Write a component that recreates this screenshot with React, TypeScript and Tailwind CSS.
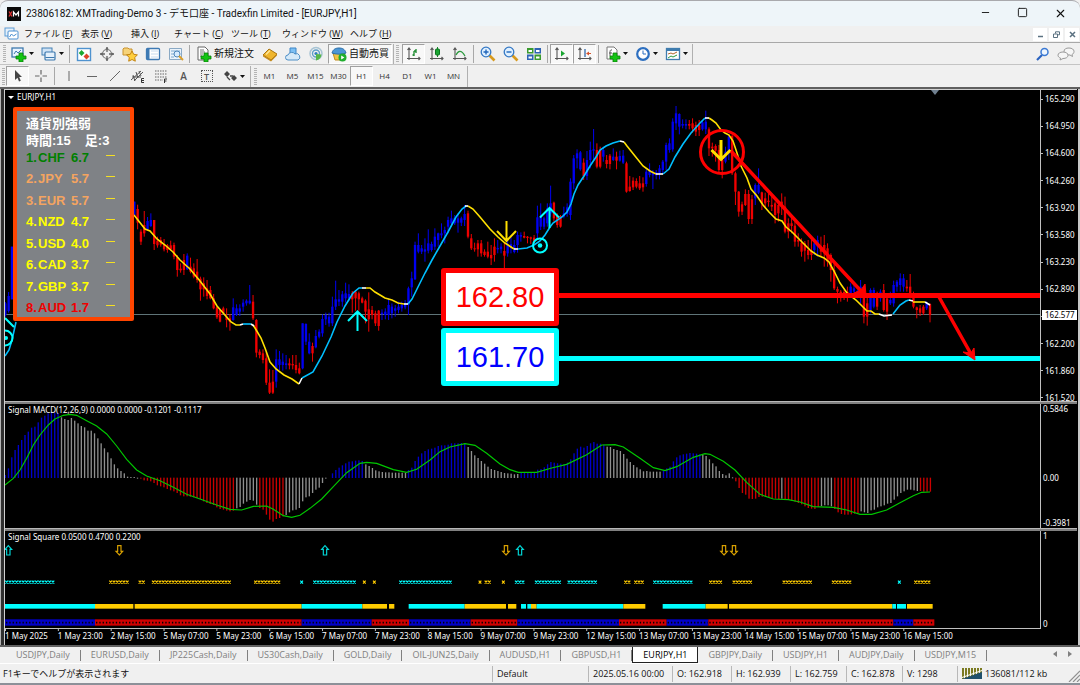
import React from 'react';
import { Minus, Square, X } from 'lucide-react';

// Horizontal distance between two bars. All chart data below is kept in
// thirds of a pixel, the plot groups are scaled down when drawn.
const STEP = 9.915;
const SCALE = 'scale(0.33333)';

const BAR_COLORS: Record<string, string> = {
  b: '#0000f0',
  r: '#f00000',
  g: '#a8a8a8',
};

interface Run {
  x: number;
  bars: string;
}

// each bar: colour, high, body top, body bottom, low
const candleRuns: Run[] = [
  { x: 16, bars: 'b636,640,676,680 b606,618,663,668 b470,470,628,628' },
  {
    x: 403,
    bars:
      'b335,335,375,375 r344,357,398,418 r418,425,455,465 r363,405,430,440 b381,393,418,420 b370,390,408,411 r390,390,462,480 r440,452,466,473 r441,450,464,470 r447,465,478,484 r462,466,480,488 r452,466,478,482 r458,465,500,508 r495,502,540,560 r520,536,541,548 r492,510,540,555 b490,497,538,540 r503,530,545,550 r520,535,560,565 r507,545,570,578 r560,566,598,632 r562,580,598,620 r570,595,618,628 r588,600,625,628 r612,625,655,658 r650,652,682,687',
  },
  {
    x: 660,
    bars:
      'r660,660,695,697 r650,655,670,675 r655,680,690,712 r672,685,695,722 b625,652,690,692 b643,655,675,678 b643,655,665,678 b628,638,650,665 b628,632,640,647 b585,632,640,643 r615,635,685,690 r687,690,788,802 r778,785,795,805 r778,790,810,820 r785,805,878,885 r838,878,908,912 r840,875,908,912 b778,808,875,893 b783,808,825,840 b790,815,825,842 b795,820,825,838 r805,820,826,838 r795,822,826,838 r795,825,840,850 r818,835,850,853 b700,700,835,838 b700,702,755,765 b730,755,790,793 r758,768,790,815 b720,738,772,775 b718,725,740,745 b673,687,730,740 b668,675,688,705 b668,680,700,710 b620,650,700,708 b572,628,650,660 b600,628,635,648',
  },
  {
    x: 1027,
    bars:
      'b603,613,635,650 b578,610,625,638 b583,612,625,632 r603,610,628,668 r600,605,625,662 r605,610,628,662 r620,625,638,640 r628,632,665,700 r607,658,688,725 r648,660,675,688 r662,670,700,708 r660,662,708,722 b658,668,672,690 b655,665,675,688 b625,645,675,690 b640,650,670,685 b645,655,662,680 b635,650,660,670 b635,645,655,665 b630,640,652,658 b590,595,645,675 b545,565,592,620 b455,465,568,570 b430,465,485,490 b465,475,485,492 b445,478,485,515 b418,460,482,490 b455,462,480,485 b415,440,470,480 b428,430,450,470 b400,430,436,445 b410,420,430,460 b380,390,410,430 b362,385,400,405 b375,383,400,405 b370,385,398,428 b380,385,398,408 b345,372,390,408',
  },
  {
    x: 1404,
    bars:
      'r362,370,440,445 r432,445,475,480 r458,475,478,485 r450,460,478,500 r450,460,490,500 r478,485,495,500 r455,485,500,505 r465,495,505,525 r445,470,495,515 b450,474,478,490 b460,470,478,490 r460,483,497,535 b445,465,490,500 b440,462,475,490 b450,465,486,490 b425,435,465,488 b427,435,440,455 r425,438,443,445 r438,440,444,460 r440,442,446,462 r435,443,455,465 b347,382,430,445 b340,380,410,420 b380,385,410,418 b340,355,400,410 b287,340,370,380 r335,338,385,395 r370,378,405,413 r375,378,410,413 b350,370,380,385 b340,352,372,380 b265,275,375,390 b195,205,280,298 b178,190,205,235 b183,187,238,242 r205,218,258,270 b183,210,258,270 b155,180,210,235 b117,178,182,213 r160,180,230,235 r170,180,230,235',
  },
  {
    x: 1810,
    bars:
      'b170,180,200,215 r195,210,222,235 r192,197,222,238 b175,200,210,213 r185,200,212,238 b182,198,212,215 b180,197,218,222 r215,220,305,308 r258,290,303,305 r262,272,292,300 r265,273,290,295 r258,280,295,300 r262,280,292,305 b235,245,282,290 b220,240,255,262 b240,246,256,297 b240,246,256,268 b225,235,250,268 b210,215,240,250 b158,165,215,240 b145,160,180,188 b85,95,178,185 b48,70,100,120 b70,72,110,133 b88,102,107,115 b88,102,107,118 r90,102,107,118 r85,100,115,128 r95,105,125,138 r90,105,120,138 b90,97,118,122 b62,95,118,132',
  },
  {
    x: 2127,
    bars:
      'r112,118,175,198 r158,170,175,200 r163,168,182,215 r165,180,240,250 r200,210,240,265 b170,185,215,220 b135,140,190,210 r135,138,250,255 r245,250,305,345 r303,305,365,380 r335,343,365,375 r298,312,345,348 r300,312,387,402 r315,328,387,402 b280,285,325,345 b235,285,308,312 r305,307,340,360 r308,325,340,355 r310,332,336,350 r320,345,350,363 r335,340,375,400 r333,345,370,395 r310,335,345,375 r320,350,425,430 r385,400,425,445 r378,400,408,430 r395,407,455,470 r430,450,455,470 r445,458,485,500 r453,460,482,515 r450,480,495,508 r450,482,495,510',
  },
  {
    x: 2443,
    bars:
      'b450,460,480,495 b437,450,470,500 r440,470,485,500 r435,465,490,530 r460,475,515,530 r490,495,540,575 r520,540,595,600 r590,597,605,640 r600,605,612,635 r600,606,612,630 r590,605,620,635 b580,590,610,620 b585,595,605,620 b600,604,612,625 b570,590,610,640 r590,610,680,700 r620,640,680,707 b595,600,660,670 b593,600,650,655 r605,615,650,660 b598,605,625,635 r582,600,660,665 r620,625,665,690 b605,630,640,645 b572,585,640,650 b570,575,590,605 b550,565,585,605 b552,565,590,605 r570,590,595,605 r552,590,610,625 r605,615,650,655 r650,652,660,685 r645,655,668,678 r645,650,670,675 b635,640,655,660 r640,643,675,697',
  },
];

const averageLines: [string, string][] = [
  ['#00bfff', '16,232 12,250 9,260 5,266'],
  ['#ffe000', '134,125 145,139 150,141 157,149 165,155 173,162 180,170 190,179 200,191 210,204 217,216 224,224 231,232 236,235 240,235'],
  ['#00bfff', '243,234 251,234'],
  ['#ffe000', '253,235 255,238 261,248 265,258 270,272 276,279 284,285 292,289 299,294'],
  ['#00bfff', '302,288 313,282 322,266 331,247 337,232 345,216 353,203 359,198 362,198'],
  ['#ffe000', '366,198 370,198 375,202 385,208 392,210 398,213 404,214'],
  ['#00bfff', '408,214 412,209 418,197 425,183 432,170 440,156 448,142 456,127 462,119 466,116'],
  ['#ffe000', '468,116 473,119 480,127 490,139 498,147 505,153 511,157 514,159'],
  ['#00bfff', '518,159 527,158 534,155 540,151 545,145 550,137 553,133 562,127 567,122 571,114 574,104 578,95 584,86 590,76 596,67 600,60 606,56 613,53 620,51'],
  ['#ffe000', '624,52 627,56 635,66 643,76 650,81 656,84'],
  ['#00bfff', '663,84 669,79 675,67 683,54 691,43 700,33 705,28'],
  ['#ffe000', '709,28 712,30 716,33 721,40 725,43 729,45 733,51 737,63 741,76 747,88 751,99 757,106 763,115 769,122 776,129 782,131 786,137 792,142 799,149 805,155 811,161 817,165 824,168 829,172 834,181 840,193 847,203 856,210 862,216 867,221 871,221 875,224 879,224'],
  ['#00bfff', '893,224 900,215 906,211 909,210'],
  ['#ffe000', '913,212 925,212'],
  ['#ffffff', '240,235 243,234'],
  ['#ffffff', '251,234 254,236'],
  ['#ffffff', '299,294 302,288'],
  ['#ffffff', '362,198 366,198'],
  ['#ffffff', '404,214 408,214'],
  ['#ffffff', '465,116 468,116'],
  ['#ffffff', '514,159 518,159'],
  ['#ffffff', '620,51 624,52'],
  ['#ffffff', '656,84 663,84'],
  ['#ffffff', '705,28 709,28'],
  ['#ffffff', '879,224 884,226 892,225'],
  ['#ffffff', '909,210 913,211'],
  ['#ffffff', '925,212 930,215'],
];

// y of the end of each histogram bar, the zero line is at 234
const macdRuns: { x: number; color: string; ends: number[] }[] = [
  { x: 15, color: 'b', ends: [225, 205, 172, 150, 135, 120, 105, 95, 83, 80, 67, 53, 47, 40, 38, 38, 40] },
  { x: 184, color: 'g', ends: [52, 57, 60, 54, 62, 70, 78, 82, 92, 92, 100, 115, 130, 145, 157, 175, 193, 205, 213, 220, 230, 231, 231, 233] },
  { x: 422, color: 'r', ends: [237, 242, 243, 245, 250, 257, 260, 263, 268, 272, 275, 280, 287, 290, 290, 291, 293, 295, 298, 305, 310, 313, 316, 323, 328, 330, 333, 335, 333] },
  { x: 710, color: 'g', ends: [326, 322, 312, 306, 301, 303, 315] },
  { x: 779, color: 'r', ends: [325, 330, 345, 360, 366, 358, 355, 350] },
  { x: 858, color: 'g', ends: [346, 338, 332, 330, 325, 305, 293, 290, 280, 270, 264, 250, 237] },
  { x: 997, color: 'b', ends: [220, 210, 203, 196, 190, 185, 184, 182, 181, 183] },
  { x: 1097, color: 'g', ends: [193, 198, 204, 211, 214, 216, 217, 217, 218, 218, 218, 218, 218] },
  { x: 1225, color: 'b', ends: [210, 203, 183, 170, 160, 153, 148, 146, 143, 138, 136, 136, 134, 130, 130, 130, 129, 130] },
  { x: 1404, color: 'g', ends: [141, 153, 166, 174, 183, 191, 200, 207, 210, 213, 216, 219, 220, 221, 223, 222] },
  { x: 1563, color: 'b', ends: [218, 217, 217, 217, 217, 209, 207, 202, 193, 186, 188, 190, 191, 192, 188, 178, 160, 146, 140, 143, 138, 130, 126, 131, 131, 134] },
  { x: 1821, color: 'g', ends: [140, 141, 147, 150, 153, 162, 176, 186, 195, 202, 208, 214, 213, 215, 215, 215, 215] },
  { x: 1990, color: 'b', ends: [212, 205, 200, 184, 172, 166, 163, 161, 159, 160, 161, 163] },
  { x: 2108, color: 'g', ends: [165, 168, 178, 190, 199, 213, 222, 226, 220, 232] },
  { x: 2207, color: 'r', ends: [245, 265, 280, 285, 297, 298, 297, 292, 291, 292, 292, 295, 297, 298] },
  { x: 2345, color: 'g', ends: [297] },
  { x: 2355, color: 'r', ends: [298, 300, 303, 306, 310, 314, 320, 325, 327, 328, 322] },
  { x: 2464, color: 'g', ends: [319, 317, 317, 320] },
  { x: 2504, color: 'r', ends: [328, 338, 343, 345, 345, 344, 342, 340] },
  { x: 2583, color: 'g', ends: [335, 338, 340, 332, 330, 323, 320, 317, 312, 310, 300, 290, 280, 275, 270, 270, 272, 274] },
  { x: 2761, color: 'r', ends: [274, 276, 276, 276] },
];

const macdSignal =
  '15,255 40,235 60,210 80,175 100,135 120,105 145,75 165,57 190,46 210,43 230,46 260,62 290,78 320,102 350,138 380,178 410,210 440,228 480,242 520,262 560,283 600,297 650,315 690,328 725,330 760,319 800,318 820,328 850,347 875,352 900,346 930,325 965,297 1000,260 1040,218 1080,190 1100,187 1130,190 1180,209 1220,217 1250,208 1290,180 1320,155 1350,141 1395,131 1425,136 1460,160 1500,192 1530,209 1555,217 1610,217 1655,204 1700,193 1760,164 1805,135 1845,134 1870,141 1920,175 1960,203 1995,212 2030,200 2080,172 2115,161 2130,163 2170,184 2205,210 2240,247 2280,283 2320,297 2365,299 2400,306 2440,320 2500,322 2540,330 2580,343 2615,343 2660,330 2700,308 2740,287 2765,277 2790,276';

type Span = [number, number, string];
const C = '#00ffff';
const Y = '#ffcc00';
const crossSpans: Span[] = [
  [20, 165, C], [332, 383, Y], [420, 434, Y], [460, 690, Y], [767, 840, Y], [905, 906, C], [944, 1068, C], [1093, 1094, Y], [1123, 1124, Y],
  [1202, 1354, C], [1440, 1441, Y], [1458, 1474, Y], [1510, 1511, Y], [1549, 1572, C], [1609, 1682, C], [1707, 1790, C], [1877, 1890, Y],
  [1907, 1930, Y], [1964, 2078, C], [2132, 2168, Y], [2202, 2256, Y], [2352, 2435, Y], [2500, 2555, Y], [2698, 2699, C], [2747, 2792, Y],
];
const trendSpans: Span[] = [
  [15, 285, C], [285, 400, Y], [404, 905, Y], [905, 1087, C], [1087, 1161, Y], [1167, 1183, Y], [1226, 1394, C], [1394, 1518, Y], [1524, 1549, Y],
  [1563, 1578, C], [1582, 1593, C], [1593, 1610, Y], [1610, 1870, C], [1870, 1936, Y], [1988, 2117, C], [2117, 2183, Y], [2187, 2677, Y],
  [2677, 2688, C], [2691, 2718, C], [2721, 2798, Y],
];
const baseSpans: Span[] = [
  [15, 285, '#0000c8'], [285, 905, '#d00000'], [905, 1115, '#0000c8'], [1115, 1227, '#d00000'], [1227, 1412, '#0000c8'], [1412, 1552, '#d00000'],
  [1552, 1857, '#0000c8'], [1857, 2000, '#d00000'], [2000, 2125, '#0000c8'], [2125, 2680, '#d00000'], [2680, 2740, '#0000c8'], [2740, 2803, '#d00000'],
];

const prices = ['165.290', '164.950', '164.600', '164.260', '163.920', '163.580', '163.230', '162.890', '162.550', '162.200', '161.860', '161.520'];

const times = [
  '1 May 2025', '1 May 23:00', '2 May 15:00', '5 May 07:00', '5 May 23:00', '6 May 15:00', '7 May 07:00', '7 May 23:00', '8 May 15:00',
  '9 May 07:00', '9 May 23:00', '12 May 15:00', '13 May 07:00', '13 May 23:00', '14 May 15:00', '15 May 07:00', '15 May 23:00', '16 May 15:00',
];

const strengths = [
  { name: 'CHF', value: '6.7', color: 'text-[#008000]' },
  { name: 'JPY', value: '5.7', color: 'text-[#f4a460]' },
  { name: 'EUR', value: '5.7', color: 'text-[#f4a460]' },
  { name: 'NZD', value: '4.7', color: 'text-[#ffff00]' },
  { name: 'USD', value: '4.0', color: 'text-[#ffff00]' },
  { name: 'CAD', value: '3.7', color: 'text-[#ffff00]' },
  { name: 'GBP', value: '3.7', color: 'text-[#ffff00]' },
  { name: 'AUD', value: '1.7', color: 'text-[#f00000]' },
];

const menus = [
  { label: 'ファイル', accel: 'F', width: 'w-[57px]' },
  { label: '表示', accel: 'V', width: 'w-[50px]' },
  { label: '挿入', accel: 'I', width: 'w-[43px]' },
  { label: 'チャート', accel: 'C', width: 'w-[57px]' },
  { label: 'ツール', accel: 'T', width: 'w-[51px]' },
  { label: 'ウィンドウ', accel: 'W', width: 'w-[68px]' },
  { label: 'ヘルプ', accel: 'H', width: 'w-[50px]' },
];

const tabs = [
  'USDJPY,Daily', 'EURUSD,Daily', 'JP225Cash,Daily', 'US30Cash,Daily', 'GOLD,Daily', 'OIL-JUN25,Daily', 'AUDUSD,H1',
  'GBPUSD,H1', 'EURJPY,H1', 'GBPJPY,Daily', 'USDJPY,H1', 'AUDJPY,Daily', 'USDJPY,M15',
];

/* ---------- toolbar pieces ---------- */

const Icon: React.FC<{ children: React.ReactNode }> = ({ children }) => (
  <svg viewBox="0 0 16 16" className="h-4 w-4 shrink-0" fill="none" aria-hidden="true">{children}</svg>
);

const Grip = () => (
  <div className="flex h-[17px] w-[5px] shrink-0 justify-center">
    <div className="w-[3px] bg-[repeating-linear-gradient(to_bottom,#b4b4b4_0_1px,#f0f0f0_1px_2px)]" />
  </div>
);

const Sep = () => <div className="mx-[2px] h-[18px] w-px shrink-0 bg-[#a8a8a8]" />;

interface ToolProps {
  label: string;
  pressed?: boolean;
  drop?: boolean;
  children: React.ReactNode;
}

const Tool: React.FC<ToolProps> = ({ label, pressed, drop, children }) => (
  <button
    type="button"
    aria-label={label}
    className={`flex h-5 shrink-0 items-center justify-center ${drop ? 'w-[30px] gap-[2px]' : 'w-[23px]'} ${pressed ? 'border border-[#a0a0a0] border-r-white border-b-white bg-[#f8f8f8]' : ''}`}
  >
    {children}
    {drop && <svg viewBox="0 0 5 3" className="h-[3px] w-[5px]" aria-hidden="true"><path d="M0 0h5L2.5 3z" fill="#111" /></svg>}
  </button>
);

const Plus = () => <path d="M8 7h4v3h3v3h-3v3H8v-3H5v-3h3z" fill="#12c412" stroke="#0b7d0b" strokeWidth="0.8" />;
const Axes = () => <path d="M3 2v12M1 12.5h13M1.5 4L3 2l1.500 2M12.500 11l1.500 1.500-1.500 1.500" stroke="#555" strokeWidth="1.1" />;

const Lens: React.FC<{ plus?: boolean }> = ({ plus }) => (
  <Icon>
    <path d="M9.500 9.500l5 5" stroke="#d79a1e" strokeWidth="2.600" />
    <circle cx="6" cy="6" r="4.800" fill="#dff0ff" stroke="#3578c4" strokeWidth="1.300" />
    <path d={plus ? 'M3.500 6h5M6 3.500v5' : 'M3.500 6h5'} stroke="#2266bb" strokeWidth="1.400" />
  </Icon>
);

const MainToolbar = () => (
  <div className="flex h-[22px] items-center border-b border-[#c4c4c4] pl-[2px]">
    <Grip />
    <Tool label="New chart" drop>
      <Icon><rect x="1" y="2" width="11" height="9" fill="#e8f3ff" stroke="#3e79ad" strokeWidth="1.300" /><path d="M3 8l2-3 2 2 3-3" stroke="#3e79ad" /><Plus /></Icon>
    </Tool>
    <Tool label="Profiles" drop>
      <Icon><rect x="1" y="2" width="10" height="7" fill="#cfe3f6" stroke="#4580b4" /><rect x="4" y="6" width="10" height="8" rx="1" fill="#e4f0fb" stroke="#3c78ae" strokeWidth="1.200" /><path d="M4.500 11.500h9" stroke="#3c78ae" /></Icon>
    </Tool>
    <Sep />
    <Tool label="Market watch">
      <Icon><rect x="1.500" y="2.500" width="13" height="12" fill="#fff" stroke="#4f93cf" strokeWidth="1.400" /><path d="M5.500 4L8.500 7 5.500 10 2.800 7z" fill="#1ba831" /><path d="M10.500 7.500l3 3-3 3-3-3z" fill="#de4328" /></Icon>
    </Tool>
    <Tool label="Data window">
      <Icon><circle cx="8" cy="8" r="4.500" stroke="#777" strokeWidth="1.200" /><path d="M8 1v5M8 10v5M1 8h5M10 8h5" stroke="#666" strokeWidth="1.300" /><path d="M8 1l-1.500 2h3zM8 15l-1.500-2h3zM1 8l2-1.500v3zM15 8l-2-1.500v3z" fill="#666" /></Icon>
    </Tool>
    <Tool label="Navigator">
      <Icon><path d="M1 3l1-1h4l1 1h3v6H1z" fill="#f6d37a" stroke="#c8922e" /><path d="M10 5l1.700 3.300 3.700.6-2.700 2.600.6 3.700L10 13.500l-3.300 1.700.6-3.700-2.700-2.600 3.700-.6z" fill="#ffcf3d" stroke="#c38412" /></Icon>
    </Tool>
    <Tool label="Terminal">
      <Icon><rect x="1.500" y="2.500" width="13" height="11" rx="1" fill="#fff" stroke="#3d79b3" strokeWidth="1.300" /><path d="M2 3h2.500v10H2z" fill="#3d79b3" /><path d="M6 5h7M6 8h7M6 11h7" stroke="#c7dcef" /></Icon>
    </Tool>
    <Tool label="Strategy tester">
      <Icon><path d="M1.500 2.500h12v11h-12z" fill="#eaf3fb" stroke="#8aa9c4" /><path d="M3 5h9M3 8h4M3 11h3" stroke="#7da9ce" /><circle cx="9" cy="8" r="3" fill="#d7ecff" stroke="#4d86b9" /><path d="M11 10l4 4" stroke="#dca02c" strokeWidth="2" /></Icon>
    </Tool>
    <Sep />
    <button type="button" className="ml-1 flex h-5 w-[62px] shrink-0 items-center gap-[2px] whitespace-nowrap text-[10px]">
      <Icon><path d="M2 1h7l3 3v10H2z" fill="#fff" stroke="#666" /><path d="M4 4h4M4 6h5M4 8h3M4 10h2" stroke="#777" /><Plus /></Icon>
      新規注文
    </button>
    <Tool label="MetaEditor">
      <Icon><path d="M1 9l6-6 8 5-6 6z" fill="#efb52d" stroke="#a97512" /><path d="M1 9v1.500L9 15.500V14zM9 15.500L15 9.500V8l-6 6z" fill="#c48b1d" /><path d="M4 8.500l4-4" stroke="#ffe79a" strokeWidth="1.500" /></Icon>
    </Tool>
    <Tool label="Virtual hosting">
      <Icon><path d="M5 2h6v5.500H5z" fill="#7cc0f4" stroke="#3f86c6" /><path d="M3 14a2.500 2.500 0 010-5 4 4 0 017-1 3 3 0 013 6z" fill="#d5e9f8" stroke="#4e8fc6" /></Icon>
    </Tool>
    <Tool label="Signals">
      <Icon><circle cx="8" cy="7.500" r="6" stroke="#a8c4d4" strokeWidth="1.500" /><circle cx="8" cy="7.500" r="3.500" stroke="#5d9fc8" strokeWidth="1.400" /><circle cx="8" cy="7.500" r="1.600" fill="#2f7fc0" /><path d="M8 8v6.500a7 7 0 005.500-6z" fill="#55b648" /></Icon>
    </Tool>
    <button type="button" aria-pressed="true" className="ml-px flex h-5 w-[64px] shrink-0 items-center gap-[2px] whitespace-nowrap border border-[#a0a0a0] border-r-white border-b-white bg-[#f8f8f8] pl-[2px] text-[10px]">
      <Icon><path d="M2 7h12l-2 7H4z" fill="#f2c443" stroke="#bf8a1d" /><path d="M1 7c1-4 4-5 7-5s6 1 7 5c-3 1.500-11 1.500-14 0z" fill="#4c97d5" stroke="#2b6ea8" /><circle cx="11.500" cy="11.500" r="4" fill="#1fae2e" /><path d="M10.200 9.500v4l3.200-2z" fill="#fff" /></Icon>
      自動売買
    </button>
    <div className="ml-px h-5 w-px shrink-0 bg-[#b0b0b0]" />
    <div className="ml-px"><Grip /></div>
    <div className="ml-[2px] flex">
      <Tool label="Bar chart" pressed><Icon><Axes /><path d="M8 5v5M8 9H6.500M8 5h2M10 3v4" stroke="#17882a" strokeWidth="1.300" /></Icon></Tool>
      <Tool label="Candlesticks"><Icon><Axes /><path d="M8.500 1v10" stroke="#17882a" /><rect x="6.500" y="3" width="4" height="6" rx="1" fill="#19a531" stroke="#0d7420" /></Icon></Tool>
      <Tool label="Line chart"><Icon><Axes /><path d="M4 9c2-4 5-6 9 1" stroke="#2b9a3e" strokeWidth="1.200" /></Icon></Tool>
    </div>
    <Sep />
    <Tool label="Zoom in"><Lens plus /></Tool>
    <Tool label="Zoom out"><Lens /></Tool>
    <Tool label="Tile windows">
      <Icon><path d="M1 2h6.500v5.500H1zM8.500 8.500H15V14H8.500z" fill="#3a9a2e" /><path d="M8.500 2H15v5.500H8.500zM1 8.500h6.500V14H1z" fill="#2d63b4" /><path d="M2.500 4H6v2H2.500zM10 4h3.500v2H10zM2.500 10.500H6v2H2.500zM10 10.500h3.500v2H10z" fill="#fff" /></Icon>
    </Tool>
    <Sep />
    <Tool label="Auto scroll" pressed><Icon><Axes /><path d="M7 4.500v6l4-3z" fill="#19a531" /></Icon></Tool>
    <Tool label="Chart shift" pressed><Icon><Axes /><path d="M8 3v8" stroke="#3368a8" strokeWidth="1.300" /><path d="M9 7.500l3-2v4z" fill="#d7542c" /><path d="M11 7.500h3" stroke="#d7542c" /></Icon></Tool>
    <Sep />
    <div className="flex">
      <Tool label="Indicators" drop><Icon><path d="M2 1h7l3 3v9H2z" fill="#fff" stroke="#777" /><path d="M7 4c-2-.500-2 1-2 3v3M4 7h3" stroke="#555" /><Plus /></Icon></Tool>
      <Tool label="Periods" drop><Icon><circle cx="8" cy="8" r="5.800" fill="#fff" stroke="#2d6fc0" strokeWidth="2.200" /><path d="M8 4.500V8h3" stroke="#2d6fc0" /></Icon></Tool>
      <Tool label="Templates" drop><Icon><rect x="1.500" y="2.500" width="13" height="11" fill="#fff" stroke="#3f7cae" strokeWidth="1.300" /><path d="M1.500 4h13" stroke="#3f7cae" strokeWidth="2" /><path d="M3 8l3-1 2 1 4-2" stroke="#b3662b" /><path d="M3 12l3-2 2 1 4-2" stroke="#2b9a3e" /></Icon></Tool>
    </div>
    <div className="ml-px h-5 w-px shrink-0 bg-[#b0b0b0]" />
    <div className="flex-1" />
    <div className="flex pr-[3px]">
      <Tool label="Search"><Icon><path d="M7 9l-5 5" stroke="#2a62c0" strokeWidth="2.200" /><circle cx="9.500" cy="6" r="3.500" fill="#eef6ff" stroke="#3c7ad4" strokeWidth="1.500" /></Icon></Tool>
      <Tool label="Chat">
        <svg viewBox="0 0 18 14" className="h-[14px] w-[18px]" fill="#f6f6f6" stroke="#999" aria-hidden="true">
          <path d="M12 1c3 0 5 1.500 5 3.500 0 1.500-1 2.500-2 3l.5 2-2.500-1.500c-3.500 0-6-1-6-3.500S9 1 12 1z" />
          <path d="M6 5c3 0 5 1.300 5 3.300S9 11.500 6 11.500L3 13l.5-2C2 10.500 1 9.500 1 8.300 1 6.300 3 5 6 5z" />
        </svg>
      </Tool>
    </div>
  </div>
);

const timeframes = ['M1', 'M5', 'M15', 'M30', 'H1', 'H4', 'D1', 'W1', 'MN'];

const DrawingToolbar = () => (
  <div className="flex h-[22px] items-center pl-px">
    <Grip />
    <Tool label="Cursor" pressed><Icon><path d="M5 2v10l2.500-2.300L9 13.500l1.800-.800L9.200 9H12z" fill="#444" /></Icon></Tool>
    <Tool label="Crosshair"><Icon><path d="M8 2v4.500M8 9.500V14M2 8h4.500M9.500 8H14" stroke="#666" strokeWidth="1.200" /></Icon></Tool>
    <Sep />
    <Tool label="Vertical line"><Icon><path d="M8 3v10" stroke="#666" /></Icon></Tool>
    <Tool label="Horizontal line"><Icon><path d="M3 8.500h10" stroke="#666" /></Icon></Tool>
    <Tool label="Trendline"><Icon><path d="M3 13L13 3" stroke="#666" /></Icon></Tool>
    <Tool label="Channel"><Icon><path d="M1 12L11 3M4 13l9-9M3 7l2 6M6 4l2 6M9 3l2 5M2 9h9" stroke="#555" /><path d="M14 10.500h-2.500v4H14M11.500 12.500H14" stroke="#333" /></Icon></Tool>
    <Tool label="Fibonacci"><Icon><path d="M2 3h12M2 6h12M2 9h12M2 12h8" stroke="#666" strokeDasharray="1.500 1" /><path d="M14 11h-2.500v4M11.500 13H13.500" stroke="#333" /></Icon></Tool>
    <Tool label="Text"><span className="text-[10px] font-semibold text-[#555]">A</span></Tool>
    <Tool label="Text label"><span className="flex h-3 w-3 items-center justify-center border border-dotted border-[#555] text-[9px] leading-none font-semibold text-[#555]">T</span></Tool>
    <Tool label="Arrows" drop><Icon><path d="M2 6l3-3 3 3-3 3zM9 10l3-3 3 3-3 3z" fill="#444" /><path d="M5 9l3 3M8 8h3" stroke="#444" strokeWidth="1.300" /></Icon></Tool>
    <div className="mx-[2px] h-[21px] w-px bg-[#b0b0b0]" />
    <Grip />
    {timeframes.map((tf) => (
      <button
        key={tf}
        type="button"
        className={`h-5 w-[23px] shrink-0 text-center text-[8px] text-[#333] ${tf === 'H1' ? 'border border-[#a0a0a0] border-r-white border-b-white bg-[#f8f8f8]' : ''}`}
      >
        {tf}
      </button>
    ))}
    <div className="ml-[2px] h-[21px] w-px bg-[#b0b0b0]" />
  </div>
);

/* ---------- chart panes ---------- */

const Candles: React.FC<Run> = ({ x, bars }) => (
  <>
    {bars.split(' ').map((bar, i) => {
      const [high, top, bottom, low] = bar.slice(1).split(',').map(Number);
      const cx = x + i * STEP;
      return (
        <g key={i} fill={BAR_COLORS[bar[0]]}>
          <rect x={cx - 1.5} y={high} width={3} height={low - high} />
          <rect x={cx - 3.5} y={top} width={7} height={Math.max(bottom - top, 3)} />
        </g>
      );
    })}
  </>
);

const PricePane = () => (
  <svg className="block h-[311px] w-full" fill="none">
    <path d="M931 0h8l-4 5z" fill="#708090" />
    <path d="M8 6h6l-3 3z" fill="#fff" />
    <text x="17" y="10" fill="#fff" fontSize="8">EURJPY,H1</text>
    <line x1="0" x2="100%" y1="224.5" y2="224.5" stroke="#5f7478" />
    <g transform={SCALE}>
      {candleRuns.map((run) => <Candles key={run.x} {...run} />)}
    </g>
    {averageLines.map(([color, points]) => (
      <polyline key={points} points={points} stroke={color} strokeWidth="1.6" />
    ))}
    <g stroke="#00ffff" strokeWidth="2">
      <path d="M357.500 241v-19M348 231l9.500-9.500 9.500 9.500M549.500 138v-19M540 127.500l9.500-9.500 9.500 9.500M5 228l9 9" />
      <circle cx="540" cy="155.500" r="7" />
      <circle cx="5" cy="248" r="7.500" />
    </g>
    <circle cx="540" cy="155.500" r="2.300" fill="#00ffff" />
    <circle cx="6" cy="248" r="2" fill="#00ffff" />
    <path d="M506.500 131v20M497 141l9.500 10 9.500-10" stroke="#ffe000" strokeWidth="2" />
    <path d="M721 50v19M711.500 60l9.500 9.500 9.500-9.500" stroke="#ffe000" strokeWidth="3" />
    <line x1="556" x2="100%" y1="205.500" y2="205.500" stroke="#ff0000" strokeWidth="5" />
    <line x1="556" x2="100%" y1="268.500" y2="268.500" stroke="#00ffff" strokeWidth="5" />
    <circle cx="722" cy="62" r="21.500" stroke="#ff0000" strokeWidth="3" />
    <g stroke="#ff0000" fill="#ff0000">
      <path d="M731 61l130 140M939 207l32 57" strokeWidth="3.500" />
      <path d="M866 205l-1-11-4 6-7 3zM975 270l-1-12-3 5-8-1z" />
    </g>
  </svg>
);

const MacdPane = () => (
  <svg className="block h-[124px] w-full" fill="none">
    <g transform="translate(0 -4)">
      <g transform={SCALE}>
        {macdRuns.map((run) =>
          run.ends.map((end, i) => (
            <rect
              key={`${run.x}-${i}`}
              x={run.x + i * STEP - 1.5}
              y={Math.min(end, 233)}
              width={4}
              height={Math.max(Math.abs(234 - end), 3)}
              fill={BAR_COLORS[run.color]}
              opacity={0.85}
            />
          )),
        )}
        <polyline points={macdSignal} stroke="#00c800" strokeWidth="3.5" />
      </g>
    </g>
    <text x="8" y="9" fill="#fff" fontSize="8">Signal MACD(12,26,9) 0.0000 0.0000 -0.1201 -0.1117</text>
  </svg>
);

const UP = 'M0-15l10 11h-5v17h-10V-4h-5z';
const DOWN = 'M0 15L10 4H5v-17H-5V4h-5z';

const SquarePane = () => (
  <svg className="block h-[97px] w-full" fill="none">
    <text x="8" y="9" fill="#fff" fontSize="8">Signal Square 0.0500 0.4700 0.2200</text>
    <g transform="translate(0 -1)">
      <g transform={SCALE}>
        {[25, 975, 1560].map((x) => <path key={x} d={UP} transform={`translate(${x} 62)`} stroke="#00d8d8" strokeWidth="3.5" />)}
        {[358, 1518, 2172, 2202].map((x) => <path key={x} d={DOWN} transform={`translate(${x} 60)`} stroke="#d8a000" strokeWidth="3.5" />)}
        {crossSpans.map(([from, to, color]) => {
          const marks: string[] = [];
          for (let x = from; x <= to; x += STEP) marks.push(`M${x - 4} 152l8 9m0-9l-8 9`);
          return <path key={from} d={marks.join('')} stroke={color} strokeWidth="3.5" />;
        })}
        {trendSpans.map(([from, to, color]) => <rect key={from} x={from} y={222} width={to - from} height={14} fill={color} />)}
        {baseSpans.map(([from, to, color]) => (
          <g key={from}>
            <rect x={from} y={268} width={to - from} height={19} fill={color} />
            <path d={`M${from + 3} 278H${to - 2}`} stroke="#000" strokeWidth="5" strokeDasharray="4 5.9" />
          </g>
        ))}
      </g>
    </g>
  </svg>
);

const Divider = () => <div className="h-[3px] border-t border-[#b8b8b8] bg-[#808080]" />;

const StrengthPanel = () => (
  <div className="absolute top-[17px] left-[9px] w-[121px] rounded-[2px] border-4 border-[#ff4500] bg-[#7f8286] pt-1 pl-[9px] font-['Liberation_Sans','Noto_Sans_CJK_JP',sans-serif] text-[13px] font-bold">
    <p className="leading-[17px] text-white">通貨別強弱</p>
    <p className="flex gap-[14px] leading-[17px] text-white"><span>時間:15</span><span>足:3</span></p>
    <ol className="flex h-[168px] flex-col justify-between">
      {strengths.map((s, i) => (
        <li key={s.name} className={`flex h-[18px] items-start leading-[18px] ${s.color}`}>
          <span className="w-3">{i + 1}.</span>
          <span className="w-[33px]">{s.name}</span>
          <span className="w-[35px]">{s.value}</span>
          <span className="mt-[6px] h-px w-[9px] bg-[#f5e020]" />
        </li>
      ))}
    </ol>
  </div>
);

const ChartWindow = () => (
  <main className="flex border-t-2 border-[#606060] bg-black font-['Noto_Sans',Tahoma,sans-serif] text-[8px] text-white">
    <div className="w-1 shrink-0 border-l border-[#b4b4b4] bg-[#303030]" />
    <div className="min-w-0 flex-1 overflow-hidden border-t border-l border-[#d0d0d0]">
      <div className="relative -ml-[5px] flex">
        <div className="relative min-w-0 flex-1">
          <PricePane />
          <div className="absolute top-0 left-[4px]"><StrengthPanel /></div>
          <div className="absolute top-[178px] left-[441px] flex flex-col gap-[2px] font-['Liberation_Sans',Arial,sans-serif] text-[29px] leading-[48px]">
            <div className="w-[118px] rounded-[3px] border-[5px] border-[#ff0000] bg-white text-center text-[#ff0000]">162.80</div>
            <div className="w-[118px] rounded-[3px] border-[5px] border-[#00ffff] bg-white text-center text-[#0000ff]">161.70</div>
          </div>
        </div>
        <div className="relative flex w-[37px] shrink-0 flex-col justify-between border-l border-[#c0c0c0] pt-[6px] leading-[6px]">
          {prices.map((p) => (
            <div key={p} className="flex items-center gap-[2px]"><span className="h-px w-[2px] bg-[#c0c0c0]" />{p}</div>
          ))}
          <div className="absolute top-[220px] left-px w-9 bg-white pl-[3px] leading-[10px] text-black">162.577</div>
        </div>
      </div>
      <Divider />
      <div className="-ml-[5px] flex">
        <div className="min-w-0 flex-1"><MacdPane /></div>
        <div className="flex w-[37px] shrink-0 flex-col justify-between border-l border-[#c0c0c0] pl-[2px] leading-[10px]">
          <span>0.5846</span>
          <span className="pt-6">0.00</span>
          <span>-0.3981</span>
        </div>
      </div>
      <Divider />
      <div className="-ml-[5px] flex">
        <div className="min-w-0 flex-1 border-b border-[#c0c0c0]"><SquarePane /></div>
        <div className="flex w-[37px] shrink-0 flex-col justify-between border-l border-[#c0c0c0] pl-[2px] leading-[10px]">
          <span>1</span>
          <span>0</span>
        </div>
      </div>
      <div className="-ml-[5px]">
        <svg className="block h-4 w-full">
          {times.map((t, i) => (
            <g key={t}>
              <rect x={5 + i * 52.84} y="0" width="1" height="2" fill="#c0c0c0" />
              <text x={5 + i * 52.84} y="10" fill="#fff" fontSize="8">{t}</text>
            </g>
          ))}
        </svg>
      </div>
    </div>
    <div className="w-[3px] shrink-0 border-r-2 border-[#c8c8c8]" />
  </main>
);

const StatusCell: React.FC<{ width: string; children: React.ReactNode }> = ({ width, children }) => (
  <span className={`flex h-4 shrink-0 items-center gap-[3px] border-l border-[#b8b8b8] pl-1 whitespace-nowrap ${width}`}>{children}</span>
);

export default function App() {
  return (
    <div className="flex min-h-screen flex-col overflow-hidden bg-[#f0f0f0] font-['Open_Sans','Noto_Sans_CJK_JP',sans-serif] text-[9px] text-[#111]">
      <header className="flex h-[26px] items-center rounded-t-lg border-t border-[#a9a9ad] bg-[#eef5f9] pl-[7px]">
        <svg viewBox="0 0 14 14" className="h-[14px] w-[14px]" aria-hidden="true">
          <rect width="14" height="14" fill="#0a0a0a" />
          <path d="M2 4.500l3 5M5 4.500l-3 5" stroke="#e03030" strokeWidth="1.300" />
          <path d="M6.500 9.500V5L9 8l2.500-3v4.500" stroke="#fff" strokeWidth="1.200" fill="none" />
        </svg>
        <h1 className="ml-[5px] font-['Roboto','Noto_Sans_CJK_JP',sans-serif] text-[10px] whitespace-nowrap">23806182: XMTrading-Demo 3 - デモ口座 - Tradexfin Limited - [EURJPY,H1]</h1>
        <div className="ml-auto flex">
          <button type="button" aria-label="Minimize" className="flex w-[38px] justify-center"><Minus className="h-[11px] w-[11px]" /></button>
          <button type="button" aria-label="Maximize" className="flex w-[37px] justify-center"><Square className="h-[11px] w-[11px]" /></button>
          <button type="button" aria-label="Close" className="flex w-[39px] justify-center"><X className="h-[13px] w-[13px]" /></button>
        </div>
      </header>

      <nav className="flex h-[17px] items-center border-b border-[#a8a8a8] pl-[4px]">
        <Icon><rect x="1" y="2" width="9" height="8" fill="#e4f0fb" stroke="#5b9bd5" /><rect x="4" y="5" width="10" height="8" rx="1" fill="#fff" stroke="#4a8fd0" /><path d="M5.500 11l2-3 2 2 3-2" stroke="#4a8fd0" /></Icon>
        <div className="ml-1 flex flex-1">
          {menus.map((m) => (
            <button key={m.accel} type="button" className={`text-left whitespace-nowrap ${m.width}`}>
              {m.label} (<u>{m.accel}</u>)
            </button>
          ))}
        </div>
        <div className="flex gap-[2px] pr-px">
          <button type="button" aria-label="Minimize chart" className="flex h-[13px] w-[14px] items-center justify-center bg-white"><svg viewBox="0 0 7 7" className="h-[7px] w-[7px]" stroke="#5b7181"><path d="M1 5.500h5" strokeWidth="1.500" /></svg></button>
          <button type="button" aria-label="Restore chart" className="flex h-[13px] w-[14px] items-center justify-center bg-white"><svg viewBox="0 0 7 7" className="h-[7px] w-[7px]" stroke="#5b7181" fill="none"><path d="M2.500 2.500V.8h4v3H5M.5 3h4v3.500h-4z" /></svg></button>
          <button type="button" aria-label="Close chart" className="flex h-[13px] w-[14px] items-center justify-center bg-white"><svg viewBox="0 0 7 7" className="h-[7px] w-[7px]" stroke="#5b7181"><path d="M1 1l5 5M6 1L1 6" strokeWidth="1.500" /></svg></button>
        </div>
      </nav>

      <MainToolbar />
      <DrawingToolbar />
      <ChartWindow />

      <div className="flex h-[18px] items-start border-t-2 border-[#606060] pl-[6px] text-[9px] text-[#808080]">
        {tabs.map((tab) =>
          tab === 'EURJPY,H1' ? (
            <button key={tab} type="button" aria-current="true" className="h-4 border border-t-0 border-[#222] bg-white px-[10px] leading-[15px] text-black">{tab}</button>
          ) : (
            <button key={tab} type="button" className="flex h-4 items-center whitespace-nowrap">
              <span className="px-[10px]">{tab}</span>
              <span className="h-[11px] w-px bg-[#808080]" />
            </button>
          ),
        )}
        <div className="mt-1 ml-auto flex gap-[11px] pr-2">
          <button type="button" aria-label="Scroll left"><svg viewBox="0 0 4 6" className="h-[6px] w-1"><path d="M4 0v6L0 3z" fill="#808080" /></svg></button>
          <button type="button" aria-label="Scroll right"><svg viewBox="0 0 4 6" className="h-[6px] w-1"><path d="M0 0v6l4-3z" fill="#808080" /></svg></button>
        </div>
      </div>

      <footer className="flex h-[20px] items-center border-t border-white text-[9px]">
        <span className="flex-1 pl-[3px]">F1キーでヘルプが表示されます</span>
        <StatusCell width="w-[96px]">Default</StatusCell>
        <StatusCell width="w-[84px]">2025.05.16 00:00</StatusCell>
        <StatusCell width="w-[59px]">O: 162.918</StatusCell>
        <StatusCell width="w-[59px]">H: 162.939</StatusCell>
        <StatusCell width="w-[56px]">L: 162.759</StatusCell>
        <StatusCell width="w-[56px]">C: 162.878</StatusCell>
        <StatusCell width="w-[55px]">V: 1298</StatusCell>
        <StatusCell width="w-[123px]">
          <svg viewBox="0 0 20 11" className="h-[11px] w-5" aria-hidden="true">
            <path d="M1 0v11M4 0v11M7 0v11M10 0v11M13 0v11M16 0v11M19 0v11" stroke="#7a7a20" strokeWidth="2" />
            <path d="M0 11L20 4v7z" fill="#20506c" />
            <path d="M0 9.500L20 2.500" stroke="#fff" />
          </svg>
          <span className="flex-1">136081/112 kb</span>
          <svg viewBox="0 0 12 12" className="h-3 w-3 self-end" stroke="#909090" aria-hidden="true">
            <path d="M1 12L12 1M5 12l7-7M9 12l3-3" strokeWidth="1.200" />
          </svg>
        </StatusCell>
      </footer>
      <div className="h-[2px] bg-[#8c9098]" />
    </div>
  );
}
